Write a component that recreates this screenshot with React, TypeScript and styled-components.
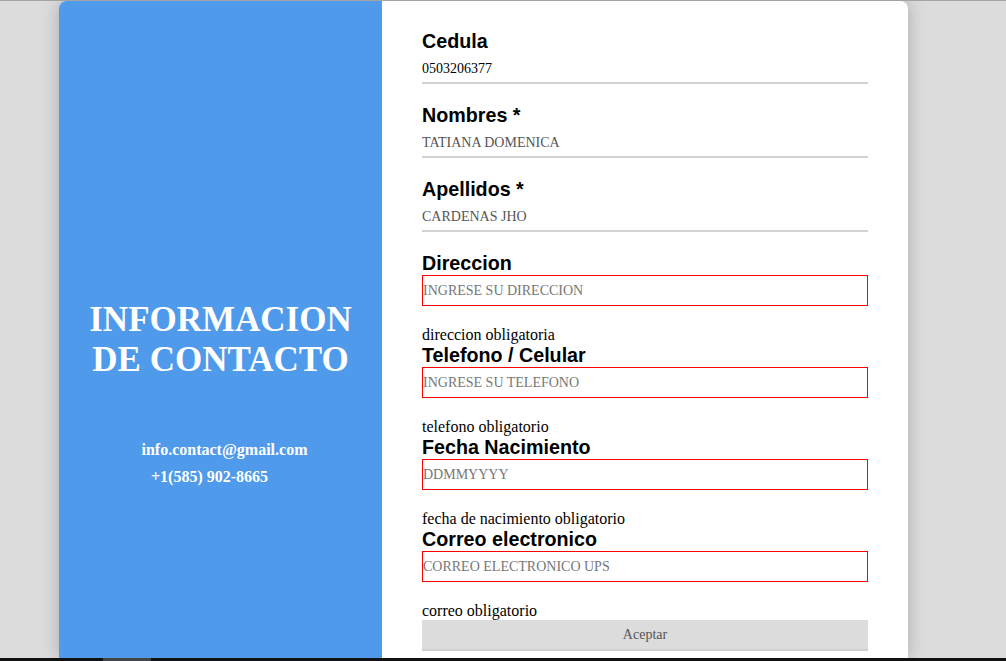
import React from "react";
import styled, { createGlobalStyle } from "styled-components";

const GlobalStyle = createGlobalStyle`
  html, body {
    margin: 0;
    padding: 0;
    background: #dcdcdc;
    overflow: hidden;
  }
`;

const Page = styled.div`
  height: 661px;
  display: flex;
  flex-direction: column;
`;

const TopLine = styled.div`
  height: 1px;
  background: #a4a4a4;
`;

const Stage = styled.div`
  flex: 1;
  display: flex;
  padding-left: 59px;
  overflow: hidden;
`;

const Card = styled.div`
  width: 849px;
  display: flex;
  border-radius: 8px 8px 0 0;
  overflow: hidden;
  box-shadow: 0 0 18px rgba(0, 0, 0, 0.22);
`;

const InfoPanel = styled.div`
  width: 323px;
  box-sizing: border-box;
  padding: 299px 16px 0;
  background: #4f9aeb;
  color: #ffffff;
  font-family: "Liberation Serif", "Times New Roman", serif;
  font-weight: bold;
  display: flex;
  flex-direction: column;
  align-items: center;
`;

const Title = styled.h1`
  margin: 0;
  font-size: 35px;
  line-height: 40px;
  text-align: center;
`;

const ContactList = styled.div`
  margin-top: 61px;
  display: flex;
  flex-direction: column;
  align-items: center;
  gap: 9px;
`;

const ContactLine = styled.div<{ $shift: number }>`
  font-size: 16px;
  line-height: 18px;
  padding-left: ${(p) => (p.$shift > 0 ? p.$shift * 2 : 0)}px;
  padding-right: ${(p) => (p.$shift < 0 ? -p.$shift * 2 : 0)}px;
`;

const FormPanel = styled.div`
  flex: 1;
  background: #ffffff;
  padding: 29px 40px 0;
`;

const Form = styled.form`
  width: 446px;
  display: flex;
  flex-direction: column;
`;

const Label = styled.label`
  display: block;
  font-family: "Liberation Sans", Arial, sans-serif;
  font-weight: bold;
  font-size: 19.7px;
  line-height: 22px;
  color: #000;
`;

const LineInput = styled.input<{ $dark?: boolean }>`
  display: block;
  width: 100%;
  height: 32px;
  box-sizing: border-box;
  margin: 0 0 20px;
  padding: 4px 0 0;
  border: none;
  border-bottom: 2px solid #d3d3d3;
  background: transparent;
  outline: none;
  font-family: "Liberation Serif", "Times New Roman", serif;
  font-size: 14px;
  color: ${(p) => (p.$dark ? "#000" : "#555")};
`;

const BoxInput = styled.input`
  display: block;
  width: 100%;
  height: 31px;
  box-sizing: border-box;
  margin: 1px 0 0;
  padding: 0;
  border: 1px solid #ff0000;
  border-radius: 0;
  outline: none;
  background: #fff;
  font-family: "Liberation Serif", "Times New Roman", serif;
  font-size: 14px;
  color: #000;

  &::placeholder {
    color: #777;
  }
`;

const ErrorText = styled.div`
  margin-top: 20px;
  font-family: "Liberation Serif", "Times New Roman", serif;
  font-size: 16px;
  line-height: 18px;
  color: #000;
`;

const SubmitButton = styled.button`
  width: 100%;
  height: 31px;
  border: none;
  border-bottom: 2px solid #d0d0d0;
  background: #dcdcdc;
  font-family: "Liberation Serif", "Times New Roman", serif;
  font-size: 14px;
  color: #555;
  padding: 0;
`;

const BottomBar = styled.div`
  height: 3px;
  background: #111;
  display: flex;
`;

const BarThumb = styled.div`
  margin-left: 103px;
  width: 48px;
  background: #444;
`;

const requiredFields = [
  { label: "Direccion", placeholder: "INGRESE SU DIRECCION", error: "direccion obligatoria" },
  { label: "Telefono / Celular", placeholder: "INGRESE SU TELEFONO", error: "telefono obligatorio" },
  { label: "Fecha Nacimiento", placeholder: "DDMMYYYY", error: "fecha de nacimiento obligatorio" },
  { label: "Correo electronico", placeholder: "CORREO ELECTRONICO UPS", error: "correo obligatorio" },
];

export default function App() {
  return (
    <>
      <GlobalStyle />
      <Page>
        <TopLine />
        <Stage>
          <Card>
            <InfoPanel>
              <Title>
                INFORMACION
                <br />
                DE CONTACTO
              </Title>
              <ContactList>
                <ContactLine $shift={4}>info.contact@gmail.com</ContactLine>
                <ContactLine $shift={-11}>+1(585) 902-8665</ContactLine>
              </ContactList>
            </InfoPanel>
            <FormPanel>
              <Form onSubmit={(e) => e.preventDefault()}>
                <Label>Cedula</Label>
                <LineInput $dark readOnly value="0503206377" />
                <Label>Nombres *</Label>
                <LineInput readOnly value="TATIANA DOMENICA" />
                <Label>Apellidos *</Label>
                <LineInput readOnly value="CARDENAS JHO" />
                {requiredFields.map((f) => (
                  <React.Fragment key={f.label}>
                    <Label>{f.label}</Label>
                    <BoxInput placeholder={f.placeholder} />
                    <ErrorText>{f.error}</ErrorText>
                  </React.Fragment>
                ))}
                <SubmitButton type="submit">Aceptar</SubmitButton>
              </Form>
            </FormPanel>
          </Card>
        </Stage>
        <BottomBar>
          <BarThumb />
        </BottomBar>
      </Page>
    </>
  );
}
